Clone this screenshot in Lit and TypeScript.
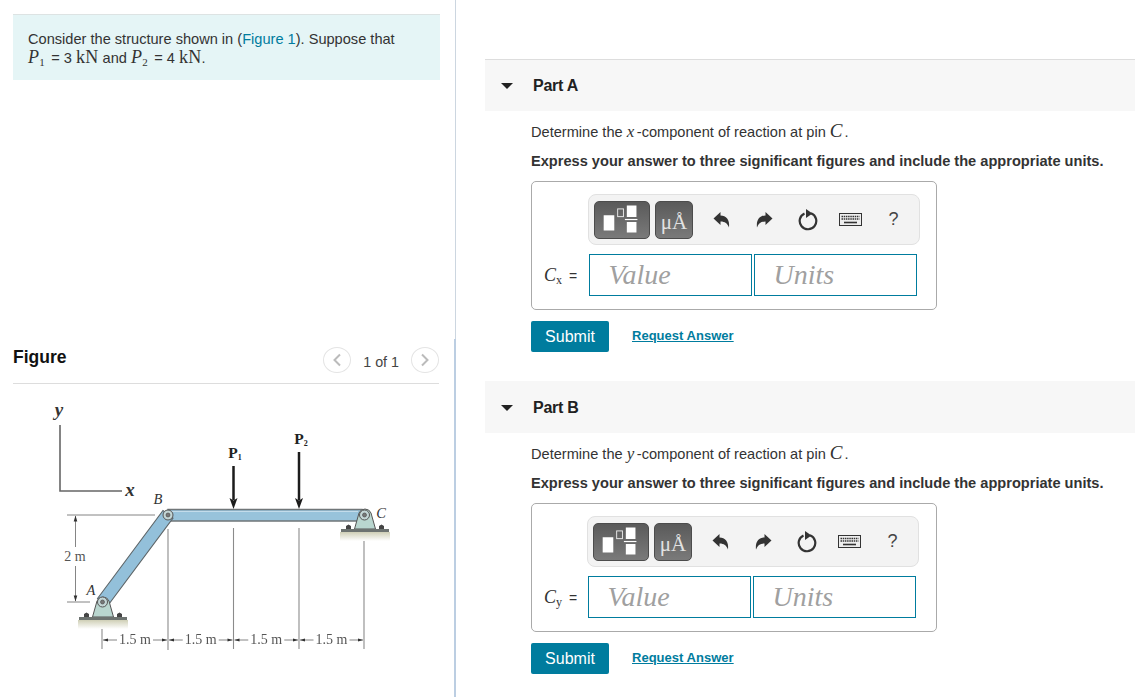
import { LitElement, html, css, svg } from "lit";
import { customElement } from "lit/decorators.js";

const dim = (x1: number, x2: number) => {
  const c = (x1 + x2) / 2;
  return svg`
    <line class="thin" x1=${x1 + 1} y1="640" x2=${c - 18} y2="640"/>
    <line class="thin" x1=${c + 18} y1="640" x2=${x2 - 1} y2="640"/>
    <path class="head" d="M${x1 + 1} 640l5-1.6v3.2z"/>
    <path class="head" d="M${x2 - 1} 640l-5-1.6v3.2z"/>
    <text class="dim" x=${c} y="644" text-anchor="middle">1.5 m</text>`;
};

const support = (cx: number, top: number, base: number) => svg`
  <rect x=${cx - 25} y=${base + 3} width="50" height="9" fill="url(#shadow)"/>
  <path d="M${cx - 10.500} ${base} L${cx - 6} ${top + 4} A6.500 6.500 0 0 1 ${cx + 6} ${top + 4} L${cx + 10.500} ${base} Z" fill="#b9d6cf" stroke="#555" stroke-width="1"/>
  <rect x=${cx - 24} y=${base} width="48" height="3" fill="#6d7370"/>
  <path d="M${cx - 19} ${base}v-3l2.500-1.500 2.500 1.500v3zM${cx + 14} ${base}v-3l2.500-1.500 2.500 1.500v3z" fill="#444"/>`;

const pin = (x: number, y: number) => svg`
  <circle cx=${x} cy=${y} r="5" fill="#c3d5d5" stroke="#555" stroke-width="1"/>
  <circle cx=${x} cy=${y} r="2" fill="#777" stroke="#444" stroke-width=".6"/>`;

const diagram = svg`
  <svg class="diagram" viewBox="0 400 427 260" width="427" height="260" aria-label="Structure diagram">
    <defs>
      <linearGradient id="shadow" x1="0" y1="0" x2="0" y2="1">
        <stop offset="0" stop-color="#cfcfb6"/><stop offset="1" stop-color="#fff"/>
      </linearGradient>
      <filter id="soft"><feGaussianBlur stdDeviation=".3"/></filter>
    </defs>
    <g transform="translate(-13 0)">
      <g filter="url(#soft)">
        <path class="axis" d="M60 425V491H122"/>
        <line class="thin" x1="67" y1="515" x2="155" y2="515"/>
        <line class="thin" x1="67" y1="602" x2="90" y2="602"/>
        <line class="thin" x1="75.500" y1="516" x2="75.500" y2="547"/>
        <line class="thin" x1="75.500" y1="566" x2="75.500" y2="601"/>
        <path class="head" d="M75.500 515.500l-1.800 6h3.600zM75.500 601.500l-1.800-6h3.600z"/>
        <line class="grey" x1="102" y1="628" x2="102" y2="649"/>
        <line class="grey" x1="168" y1="529" x2="168" y2="650"/>
        <line class="grey" x1="233.500" y1="528" x2="233.500" y2="649"/>
        <line class="grey" x1="299" y1="528" x2="299" y2="649"/>
        <line class="grey" x1="364" y1="540" x2="364" y2="649"/>
        <path d="M168 509.500H362V521H168Z" fill="#98c3db" stroke="#6f7678" stroke-width="1.400"/>
        <path d="M168 511.500H358" stroke="#c3dceb" stroke-width="1"/>
        <path d="M97.500 598.500L163 510.500L173 518L107.500 606Z" fill="#93c0da" stroke="#5d6568" stroke-width="1.100"/>
        ${support(103, 597, 617)}
        ${support(365, 509, 529)}
        ${pin(102.500, 602)}
        ${pin(168, 515)}
        ${pin(364.500, 515)}
        <line class="force" x1="233.500" y1="466" x2="233.500" y2="500"/>
        <path class="force-head" d="M233.500 509l-4-11 4 2.500 4-2.500z"/>
        <line class="force" x1="299" y1="452" x2="299" y2="500"/>
        <path class="force-head" d="M299 509l-4-11 4 2.500 4-2.500z"/>
        ${dim(102, 168)}
        ${dim(168, 233.500)}
        ${dim(233.500, 299)}
        ${dim(299, 364)}
      </g>
      <text class="lab bi" x="59" y="416" text-anchor="middle">y</text>
      <text class="lab bi" x="130" y="496" text-anchor="middle">x</text>
      <text class="lab i" x="158" y="504" text-anchor="middle">B</text>
      <text class="lab i" x="91" y="595" text-anchor="middle">A</text>
      <text class="lab i" x="381" y="518" text-anchor="middle">C</text>
      <text class="lab dim" x="75" y="561" text-anchor="middle">2 m</text>
      <text class="lab b" x="235" y="458" text-anchor="middle">P<tspan font-size="8" dy="2">1</tspan></text>
      <text class="lab b" x="301" y="444" text-anchor="middle">P<tspan font-size="8" dy="2">2</tspan></text>
    </g>
  </svg>`;

const toolbar = html`
  <div class="toolbar">
    <button class="tool wide" aria-label="Templates">
      <svg width="56" height="38" viewBox="0 0 56 38">
        <path d="M9 14h11v16H9zM33 4h10v12H33zM33 21h10v11H33z" fill="#fff"/>
        <rect x="23.500" y="7.500" width="6" height="8" fill="none" stroke="#e8e8e8"/>
        <path d="M31 18.500h13" stroke="#fff" stroke-width="1.200"/>
      </svg>
    </button>
    <button class="tool units" aria-label="Units">μÅ</button>
    <span class="slot">
      <svg width="17" height="16" viewBox="0 0 17 16"><path d="M.5 6.500 7.500 0v3.500c5.500 0 9.500 4 8.500 12C14.500 11.500 12 9.500 7.500 9.500V13z" fill="#333"/></svg>
    </span>
    <span class="slot">
      <svg width="17" height="16" viewBox="0 0 17 16"><path d="M16.500 6.500 9.500 0v3.500c-5.500 0-9.500 4-8.500 12C2.500 11.500 5 9.500 9.500 9.500V13z" fill="#333"/></svg>
    </span>
    <span class="slot">
      <svg width="20" height="22" viewBox="0 0 20 22"><path d="M13 4.200A8.300 8.300 0 1 1 6.500 4.400" fill="none" stroke="#333" stroke-width="2.200"/><path d="M8 0l6.500 4.500L8 9z" fill="#333"/></svg>
    </span>
    <span class="slot">
      <svg width="23" height="13" viewBox="0 0 23 13">
        <rect x=".5" y=".5" width="22" height="12" fill="#eee" stroke="#333"/>
        <path d="M2.500 3.500h18M2.500 6h18" stroke="#333" stroke-width="1.600" stroke-dasharray="1.500 .7"/>
        <path d="M5 9.500h13" stroke="#333" stroke-width="1.600"/>
      </svg>
    </span>
    <span class="slot help">?</span>
  </div>`;

@customElement("app-root")
class AppRoot extends LitElement {
  static styles = css`
    :host { display: grid; grid-template-columns: 456px 1fr; height: 697px; overflow: hidden; font-family: "Liberation Sans", Arial, sans-serif; font-size: 14.600px; color: #333; background: #fff; }
    .left { position: relative; box-sizing: border-box; height: 697px; padding: 14px 16px 0 13px; border-right: 1px solid #ccd6e0; }
    .left::after { content: ""; position: absolute; right: -1px; top: 339px; bottom: 0; width: 2px; background: #bccee2; }
    .intro { box-sizing: border-box; height: 66px; width: 427px; padding: 15px 15px 0 15px; line-height: 18px; background: #e5f5f6; border-top: 1px solid #dde3e3; }
    .m { font-family: "Liberation Serif", "DejaVu Serif", serif; font-size: 18px; letter-spacing: .3px; }
    .intro sub { margin-right: 2px; }
    sub { font-size: 11px; line-height: 0; vertical-align: -3px; font-style: normal; }
    a { color: #007c9e; text-decoration: none; }
    .fighead { display: flex; align-items: center; justify-content: space-between; width: 426px; height: 41px; margin-top: 263px; border-bottom: 1px solid #ddd; box-sizing: border-box; }
    h2 { margin: -12px 0 0; font-size: 17.500px; line-height: 20px; color: #111; }
    .pager { display: flex; align-items: center; gap: 12px; margin-top: -3px; font-size: 14.300px; color: #444; }
    .round { box-sizing: border-box; width: 28px; height: 26px; margin-bottom: 4px; border: 1px solid #e4e4e4; border-radius: 50%; display: flex; align-items: center; justify-content: center; background: #fff; }
    .diagram { display: block; margin-top: 16px; overflow: visible; }
    .axis { fill: none; stroke: #666; stroke-width: 1.600; }
    .thin { stroke: #666; stroke-width: .8; }
    .grey { stroke: #8b8b8b; stroke-width: 1.100; }
    .head { fill: #333; }
    .force { stroke: #1c1c1c; stroke-width: 2.500; }
    .force-head { fill: #1c1c1c; }
    text { font-family: "Liberation Serif", serif; fill: #333; }
    .dim { font-size: 14px; fill: #555; }
    .lab { font-size: 14.500px; }
    .lab.dim { font-size: 14px; }
    .i { font-style: italic; }
    .lab.b { font-weight: 700; font-size: 15.500px; fill: #222; }
    .lab.bi { font-weight: 700; font-style: italic; fill: #333; font-size: 19px; }
    .right { padding-left: 29px; padding-top: 59px; }
    .part { height: 322px; }
    .phead { box-sizing: border-box; display: flex; align-items: center; height: 52px; background: #f7f7f7; border-top: 1px solid #ddd; }
    .part.second .phead { border-top-color: #f7f7f7; }
    .tri { width: 0; height: 0; margin: 0 20px 0 16px; border-left: 6px solid transparent; border-right: 6px solid transparent; border-top: 6px solid #222; }
    .phead span { font-size: 16px; font-weight: 700; color: #212121; letter-spacing: -.25px; }
    .first .phead span { margin-top: 1px; }
    .body { padding-left: 46px; }
    p { margin: 0; }
    .q { padding-top: 12px; line-height: 18px; }
    .q .m { font-size: 19px; letter-spacing: 2px; line-height: 0; }
    .q .v { font-size: 17px; letter-spacing: 2.500px; }
    .task { margin-top: 11px; line-height: 18px; font-weight: 700; font-size: 14.600px; }
    .box { box-sizing: border-box; width: 406px; height: 129px; margin-top: 11px; padding: 12px 0 0 56px; border: 1px solid #aaa; border-radius: 5px; }
    .second .box { padding-left: 55px; }
    .toolbar { box-sizing: border-box; display: flex; align-items: center; width: 332px; height: 51px; padding-left: 5px; background: #f3f3f3; border: 1px solid #e1e1e1; border-radius: 8px; }
    .tool { box-sizing: border-box; height: 38px; padding: 0; border: 1px solid #4c4c4c; border-radius: 5px; background: linear-gradient(#5a5a5a, #7a7a7a); color: #e2e2e2; display: flex; align-items: center; justify-content: center; }
    .wide { width: 56px; }
    .units { width: 38px; margin-left: 5px; margin-right: 7px; padding-top: 5px; font-family: "Liberation Serif", serif; font-size: 21px; }
    .slot { width: 43px; display: flex; justify-content: center; align-items: center; }
    .help { font-size: 18px; color: #444; }
    .inrow { display: flex; align-items: center; margin-top: 9px; margin-left: -45px; }
    .label { width: 46px; padding-left: 1px; box-sizing: border-box; white-space: nowrap; font-size: 14px; }
    .second .label { padding-left: 2px; }
    .label .m { font-size: 18px; letter-spacing: 0; }
    .label sub { font-size: 12px; margin-right: 3px; }
    .field { box-sizing: border-box; width: 163px; height: 42px; padding-left: 18.500px; margin-right: 2px; border: 1px solid #007c9e; font-family: "Liberation Serif", serif; font-style: italic; font-size: 28px; line-height: 40px; color: #a0a0a0; }
    .acts { display: flex; align-items: center; margin-top: 11px; }
    .submit { box-sizing: border-box; width: 78px; height: 31px; padding: 0; border: 0; border-radius: 2px; background: #007c9e; color: #fff; font: 16px "Liberation Sans", Arial, sans-serif; }
    .req { margin-left: 23px; font-size: 13px; font-weight: 700; text-decoration: underline; margin-top: -2px; letter-spacing: .02px; }
  `;

  private part(name: string, v: string, cls: string) {
    return html`
      <section class="part ${cls}">
        <div class="phead"><div class="tri"></div><span>Part ${name}</span></div>
        <div class="body">
          <p class="q">Determine the <span class="m v"><i>${v}</i></span>-component of reaction at pin <span class="m"><i>C</i></span>.</p>
          <p class="task">Express your answer to three significant figures and include the appropriate units.</p>
          <div class="box">
            ${toolbar}
            <div class="inrow">
              <div class="label"><span class="m"><i>C<sub>${v}</sub></i></span> =</div>
              <div class="field">Value</div>
              <div class="field">Units</div>
            </div>
          </div>
          <div class="acts">
            <button class="submit">Submit</button>
            <a class="req" href="#">Request Answer</a>
          </div>
        </div>
      </section>`;
  }

  render() {
    return html`
      <div class="left">
        <div class="intro">
          Consider the structure shown in (<a href="#">Figure 1</a>). Suppose that<br />
          <span class="m"><i>P</i><sub>1</sub></span> = 3 <span class="m">kN</span> and <span class="m"><i>P</i><sub>2</sub></span> = 4 <span class="m">kN</span>.
        </div>
        <div class="fighead">
          <h2>Figure</h2>
          <div class="pager">
            <span class="round"><svg width="10" height="14" viewBox="0 0 10 14"><path d="M8 1.500 2.500 7 8 12.500" fill="none" stroke="#bbb" stroke-width="2"/></svg></span>
            <span>1 of 1</span>
            <span class="round"><svg width="10" height="14" viewBox="0 0 10 14"><path d="M2 1.500 7.500 7 2 12.500" fill="none" stroke="#bbb" stroke-width="2"/></svg></span>
          </div>
        </div>
        ${diagram}
      </div>
      <div class="right">
        ${this.part("A", "x", "first")}
        ${this.part("B", "y", "second")}
      </div>`;
  }
}
